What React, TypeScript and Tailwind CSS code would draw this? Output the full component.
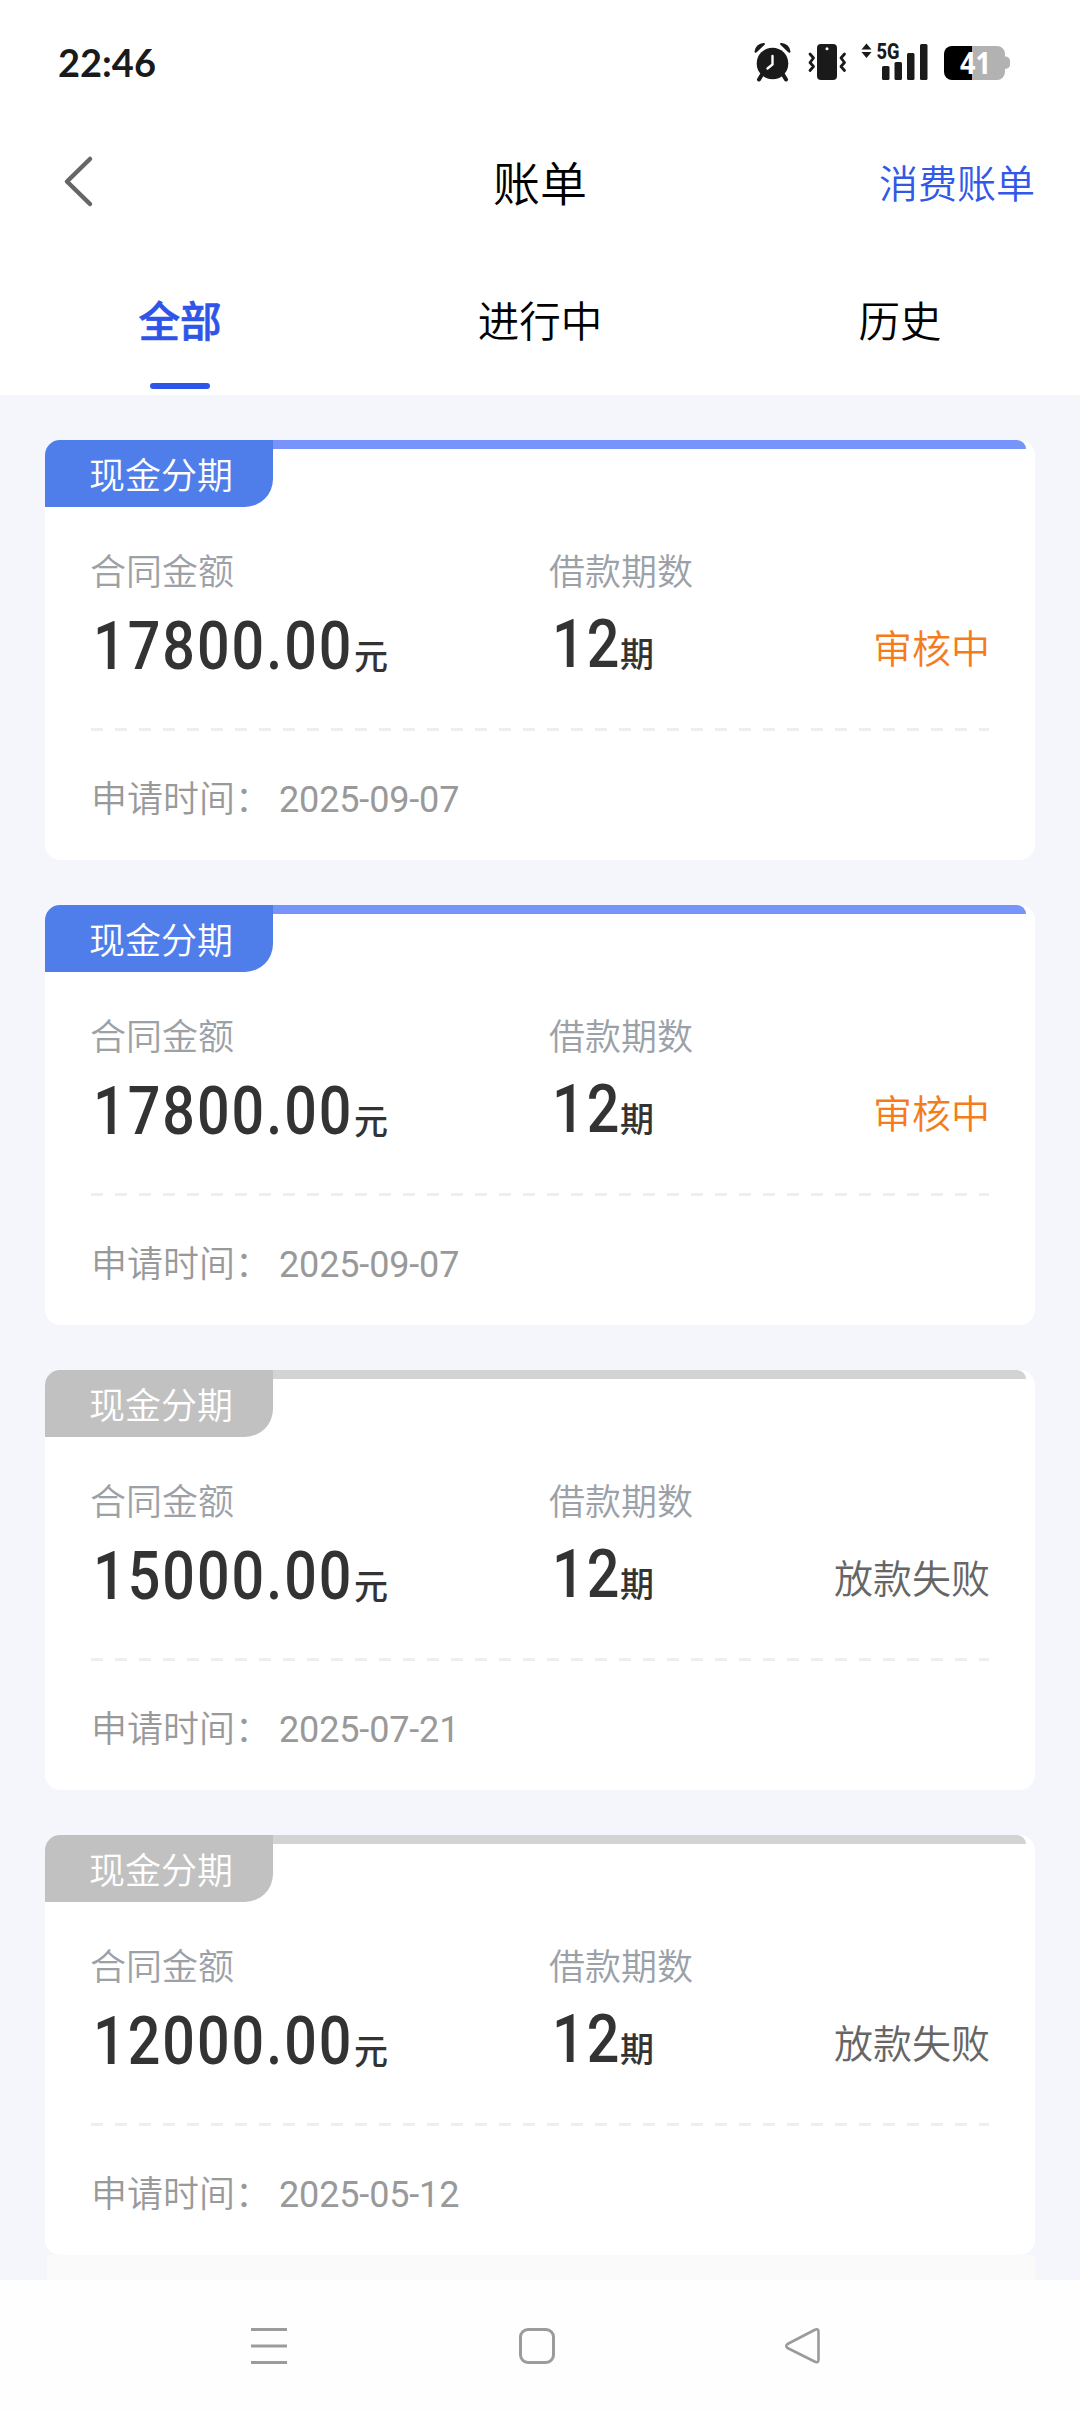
import React from "react";

type Tone = "active" | "closed";

interface Bill {
  amount: string;
  periods: string;
  status: string;
  date: string;
  tone: Tone;
}

const bills: Bill[] = [
  { amount: "17800.00", periods: "12", status: "审核中", date: "2025-09-07", tone: "active" },
  { amount: "17800.00", periods: "12", status: "审核中", date: "2025-09-07", tone: "active" },
  { amount: "15000.00", periods: "12", status: "放款失败", date: "2025-07-21", tone: "closed" },
  { amount: "12000.00", periods: "12", status: "放款失败", date: "2025-05-12", tone: "closed" },
];

const tones: Record<Tone, { tag: string; bar: string; status: string }> = {
  active: { tag: "bg-[#4f7eeb]", bar: "bg-[#7694fa]", status: "text-[#f57c1c]" },
  closed: { tag: "bg-[#c1c1c1]", bar: "bg-[#d3d3d3]", status: "text-[#666666]" },
};

function StatusIcons() {
  return (
    <svg width="262" height="44" viewBox="750 40 262 44" className="shrink-0" fill="#1a1a1a">
      {/* alarm clock */}
      <circle cx="772.5" cy="63.5" r="15.8" />
      <path d="M762 76.500l-3 5M783 76.500l3 5" transform="translate(0 -2)" stroke="#1a1a1a" strokeWidth="4" strokeLinecap="round" />
      <path d="M754.500 51.500a9.500 9.500 0 0 1 9-8.500c1.600.1 1.900 1.200.8 2l-7.600 7.300c-1.100.9-2 .4-2.200-.8zM790.500 51.500a9.500 9.500 0 0 0-9-8.500c-1.600.1-1.900 1.200-.8 2l7.600 7.300c1.100.9 2 .4 2.200-.8z" />
      <path d="M772.500 56v8.500l-5 4" stroke="#fff" strokeWidth="2.400" fill="none" strokeLinecap="round" />
      {/* vibrating phone */}
      <rect x="817" y="44" width="20" height="36" rx="4" />
      <circle cx="827" cy="48.700" r="1.500" fill="#fff" />
      <path d="M810 54l3.500 4-3.500 4.500 3.500 4-3.500 4M844.500 54l-3.500 4 3.500 4.500-3.500 4 3.500 4" stroke="#1a1a1a" strokeWidth="2.800" fill="none" strokeLinecap="round" strokeLinejoin="round" />
      {/* mobile signal */}
      <path d="M866.500 43.500l5 6h-10zM866.500 58l5-6h-10z" />
      <text x="876.500" y="58.600" fontFamily="Roboto" fontWeight="800" fontSize="21.500" textLength="23" lengthAdjust="spacingAndGlyphs">5G</text>
      <rect x="882" y="66" width="7.500" height="14" rx="1.500" />
      <rect x="894.500" y="62" width="7.500" height="18" rx="1.500" />
      <rect x="907" y="53" width="7.500" height="27" rx="1.500" />
      <rect x="920" y="44" width="7.500" height="36" rx="1.500" />
      {/* battery */}
      <path d="M972 46h25a8 8 0 0 1 8 8v2.500c3 0 5 2 5 4.500v4c0 2.500-2 3.500-5 4V72a8 8 0 0 1-8 8h-25z" fill="#b2b2b2" />
      <path d="M972 46h-20a8 8 0 0 0-8 8v18a8 8 0 0 0 8 8h20z" fill="#000" />
      <text x="960" y="74.300" fontFamily="Open Sans" fontWeight="700" fontSize="31" fill="#fff" textLength="31" lengthAdjust="spacingAndGlyphs">41</text>
    </svg>
  );
}

function StatusBar() {
  return (
    <div className="flex h-[124px] items-center justify-between pr-[68px] pl-[58px]">
      <span className="pb-px font-[Lato] text-[38px] leading-none font-bold text-[#1a1a1a]">22:46</span>
      <StatusIcons />
    </div>
  );
}

function Header() {
  return (
    <header className="grid h-[118px] grid-cols-3 items-center px-[45px]">
      <svg width="40" height="60" viewBox="0 0 40 60" fill="none" stroke="#666" strokeWidth="4.500" strokeLinejoin="round" strokeLinecap="round" className="ml-[15px]">
        <path d="M30 6L7 28.500L30 51" />
      </svg>
      <h1 className="pb-[6px] text-center text-[47px] leading-none text-black">账单</h1>
      <a className="pb-[4px] text-right text-[39px] leading-none text-[#3158e8]">消费账单</a>
    </header>
  );
}

function Tabs() {
  return (
    <nav className="grid h-[153px] grid-cols-3 text-center text-[41.5px] leading-[42px] text-black">
      <div className="flex flex-col items-center pt-[56px] font-medium text-[#2f55e8]">
        <span className="[-webkit-text-stroke:0.7px_#2f55e8]">全部</span>
        <span className="mt-[43px] h-1.5 w-[60px] rounded-full bg-[#2f55e8]" />
      </div>
      <div className="pt-[56px]">进行中</div>
      <div className="pt-[56px]">历史</div>
    </nav>
  );
}

interface FigureProps {
  label: string;
  value: string;
  unit: string;
  width: string;
  gap: string;
}

function Figure({ label, value, unit, width, gap }: FigureProps) {
  return (
    <div className="pt-[44px]">
      <div className="text-[36px] leading-none text-[#9ca1a8]">{label}</div>
      <div className={`flex items-baseline leading-[66px] text-[#333] ${gap}`}>
        <span className={`pl-[3px] ${width}`}>
          <span className="inline-block origin-left scale-x-[0.87] font-[Roboto] text-[66px] font-medium tracking-[2.3px]">{value}</span>
        </span>
        <span className="text-[34px] font-medium">{unit}</span>
      </div>
    </div>
  );
}

function BillCard({ bill }: { bill: Bill }) {
  const tone = tones[bill.tone];
  return (
    <article className="flex h-[420px] flex-col rounded-[15px] bg-white">
      <div className="flex h-[67px]">
        <div className={`flex w-[228px] items-center rounded-tl-[15px] rounded-br-[28px] pb-px pl-[44px] text-[36px] leading-none text-white ${tone.tag}`}>
          现金分期
        </div>
        <div className={`mr-[9px] h-[9px] grow rounded-tr-[9px] ${tone.bar}`} />
      </div>
      <div className="mx-[45px] flex grow flex-col">
        <div className="grid h-[221px] grid-cols-[459px_1fr_auto]">
          <Figure label="合同金额" value={bill.amount} unit="元" width="w-[264px]" gap="mt-[27px]" />
          <Figure label="借款期数" value={bill.periods} unit="期" width="w-[71px]" gap="mt-[25px]" />
          <div className={`pt-[120px] text-[39px] leading-none ${tone.status}`}>{bill.status}</div>
        </div>
        <div className="mx-px h-[3px] bg-[repeating-linear-gradient(90deg,#eeeeee_0px,#eeeeee_12px,transparent_12px,transparent_24px)]" />
        <div className="flex items-baseline pt-[47px] text-[36px] leading-none text-[#999]">
          <span className="w-[189px] pl-px">申请时间：</span>
          <span className="font-[Roboto] font-normal tracking-[-0.15px]">{bill.date}</span>
        </div>
      </div>
    </article>
  );
}

function NavigationBar() {
  return (
    <footer className="flex h-[132px] items-center bg-[#fefefe] pl-[251px]">
      <svg width="570" height="40" viewBox="251 2326 570 40" fill="none" stroke="#9b9b9b" strokeWidth="3">
        <path d="M251 2329.500h36M251 2346h36M251 2362.500h36" />
        <rect x="520.500" y="2329.500" width="33" height="33" rx="7.500" />
        <path d="M787.500 2344L814.500 2330Q818.500 2328 818.500 2332V2359.500Q818.500 2363.500 814.500 2361.500L787.500 2348Q785 2346 787.500 2344Z" strokeLinejoin="round" strokeWidth="2.600" />
      </svg>
    </footer>
  );
}

export default function App() {
  return (
    <div className="flex h-[2412px] w-[1080px] flex-col overflow-hidden bg-white font-['Noto_Sans_CJK_SC',sans-serif] font-[350]">
      <StatusBar />
      <Header />
      <Tabs />
      <main className="flex h-[1885px] flex-col overflow-hidden bg-[#f5f6fb] px-[45px] pt-[45px]">
        <div className="flex flex-col gap-[45px]">
          {bills.map((bill, i) => (
            <BillCard key={i} bill={bill} />
          ))}
        </div>
        <div className="ml-0.5 grow bg-[#fafafa]" />
      </main>
      <NavigationBar />
    </div>
  );
}
